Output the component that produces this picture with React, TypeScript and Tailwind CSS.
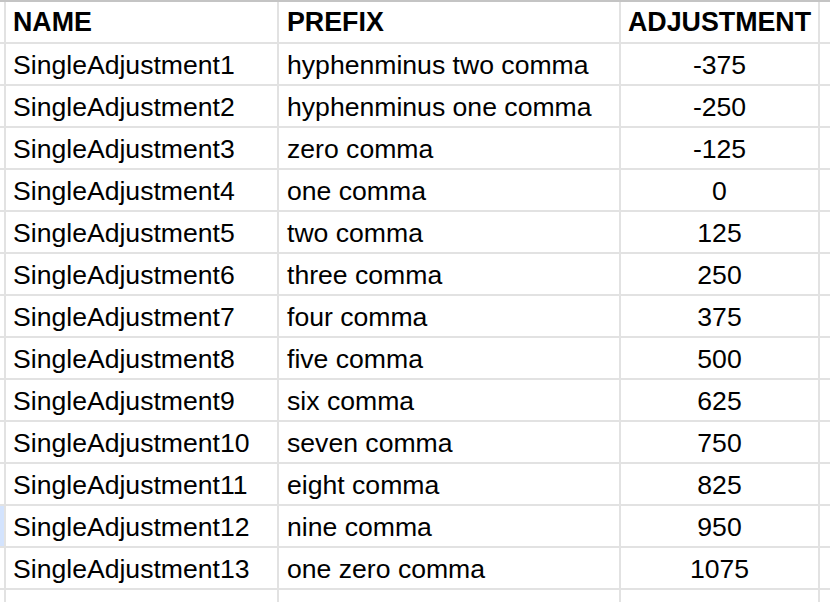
import React from "react";

const rows: [string, string, string][] = [
  ["SingleAdjustment1", "hyphenminus two comma", "-375"],
  ["SingleAdjustment2", "hyphenminus one comma", "-250"],
  ["SingleAdjustment3", "zero comma", "-125"],
  ["SingleAdjustment4", "one comma", "0"],
  ["SingleAdjustment5", "two comma", "125"],
  ["SingleAdjustment6", "three comma", "250"],
  ["SingleAdjustment7", "four comma", "375"],
  ["SingleAdjustment8", "five comma", "500"],
  ["SingleAdjustment9", "six comma", "625"],
  ["SingleAdjustment10", "seven comma", "750"],
  ["SingleAdjustment11", "eight comma", "825"],
  ["SingleAdjustment12", "nine comma", "950"],
  ["SingleAdjustment13", "one zero comma", "1075"],
];

function Row({
  a,
  b,
  c,
  bold,
  selected,
  last,
}: {
  a: string;
  b: string;
  c: string;
  bold?: boolean;
  selected?: boolean;
  last?: boolean;
}) {
  const weight = bold ? "font-bold text-[26.8px]" : "font-normal text-[26.6px]";
  const pad = bold ? "pb-0" : "pt-[3px]";
  return (
    <div
      className={`flex h-[42px] ${last ? "" : "border-b-2 border-[#e2e2e2]"}`}
    >
      <div className={`w-[4px] shrink-0 ${selected ? "bg-[#d3e3fd]" : "bg-white"}`} />
      <div
        className={`w-[273px] shrink-0 border-l-2 border-[#e2e2e2] pl-[7px] flex items-center whitespace-nowrap ${weight} ${pad}`}
      >
        {a}
      </div>
      <div
        className={`w-[342px] shrink-0 border-l-2 border-[#e2e2e2] pl-[8px] flex items-center whitespace-nowrap ${weight} ${pad}`}
      >
        {b}
      </div>
      <div
        className={`w-[201px] shrink-0 border-l-2 border-r-2 border-[#e2e2e2] flex items-center justify-center whitespace-nowrap ${weight} ${pad}`}
      >
        {c}
      </div>
    </div>
  );
}

export default function App() {
  return (
    <div
      className="w-[830px] h-[602px] overflow-hidden bg-white text-black leading-none"
      style={{ fontFamily: '"Liberation Sans", Arial, sans-serif' }}
    >
      <div className="border-t-2 border-[#c4c4c4]">
        <Row a="NAME" b="PREFIX" c="ADJUSTMENT" bold />
        {rows.map((r, i) => (
          <Row key={i} a={r[0]} b={r[1]} c={r[2]} selected={i === 11} />
        ))}
        <Row a="" b="" c="" last />
      </div>
    </div>
  );
}
